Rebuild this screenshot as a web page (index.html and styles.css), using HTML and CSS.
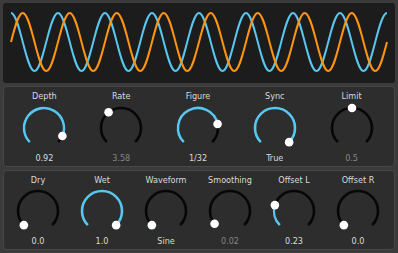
FILE: index.html
```html
<!DOCTYPE html>
<html>
<head>
<meta charset="utf-8">
<link rel="stylesheet" href="styles.css">
</head>
<body>
<div class="app">
  <div class="scope">
    <svg class="wave" width="392" height="80" viewBox="0 0 392 80">
      <path class="w-blue" d="M8 10 c4.252 0 7.918 14.143 11.75 29 s7.498 29 11.75 29 s7.918 -14.143 11.75 -29 s7.498 -29 11.75 -29 s7.918 14.143 11.75 29 s7.498 29 11.75 29 s7.918 -14.143 11.75 -29 s7.498 -29 11.75 -29 s7.918 14.143 11.75 29 s7.498 29 11.75 29 s7.918 -14.143 11.75 -29 s7.498 -29 11.75 -29 s7.918 14.143 11.75 29 s7.498 29 11.75 29 s7.918 -14.143 11.75 -29 s7.498 -29 11.75 -29 s7.918 14.143 11.75 29 s7.498 29 11.75 29 s7.918 -14.143 11.75 -29 s7.498 -29 11.75 -29 s7.918 14.143 11.75 29 s7.498 29 11.75 29 s7.918 -14.143 11.75 -29 s7.498 -29 11.75 -29 s7.918 14.143 11.75 29 s7.498 29 11.75 29 s7.918 -14.143 11.75 -29 s7.498 -29 11.75 -29 s7.918 14.143 11.75 29 s7.498 29 11.75 29 s7.918 -14.143 11.75 -29 s7.498 -29 11.75 -29"/>
      <path class="w-orange" d="M8 39 c3.832 -14.857 7.498 -29 11.75 -29 s7.918 14.143 11.75 29 s7.498 29 11.75 29 s7.918 -14.143 11.75 -29 s7.498 -29 11.75 -29 s7.918 14.143 11.75 29 s7.498 29 11.75 29 s7.918 -14.143 11.75 -29 s7.498 -29 11.75 -29 s7.918 14.143 11.75 29 s7.498 29 11.75 29 s7.918 -14.143 11.75 -29 s7.498 -29 11.75 -29 s7.918 14.143 11.75 29 s7.498 29 11.75 29 s7.918 -14.143 11.75 -29 s7.498 -29 11.75 -29 s7.918 14.143 11.75 29 s7.498 29 11.75 29 s7.918 -14.143 11.75 -29 s7.498 -29 11.75 -29 s7.918 14.143 11.75 29 s7.498 29 11.75 29 s7.918 -14.143 11.75 -29 s7.498 -29 11.75 -29 s7.918 14.143 11.75 29 s7.498 29 11.75 29 s7.918 -14.143 11.75 -29 s7.498 -29 11.75 -29 s7.918 14.143 11.75 29 s7.498 29 11.75 29 s7.918 -14.143 11.75 -29"/>
    </svg>
  </div>

  <div class="panel top">
    <div class="knob">
      <div class="label">Depth</div>
      <svg class="dial" viewBox="0 0 48 48"><path class="trk" d="M9.86 38.14A20 20 0 1 1 38.14 38.14"/><path class="val" d="M9.86 38.14A20 20 0 1 1 42.36 31.94"/><circle class="dot" cx="42.36" cy="31.94" r="4.3"/></svg>
      <div class="value">0.92</div>
    </div>
    <div class="knob">
      <div class="label">Rate</div>
      <svg class="dial" viewBox="0 0 48 48"><path class="trk" d="M9.86 38.14A20 20 0 1 1 38.14 38.14"/><circle class="dot" cx="11.59" cy="8.31" r="4.3"/></svg>
      <div class="value off">3.58</div>
    </div>
    <div class="knob">
      <div class="label">Figure</div>
      <svg class="dial" viewBox="0 0 48 48"><path class="trk" d="M9.86 38.14A20 20 0 1 1 38.14 38.14"/><path class="val" d="M9.86 38.14A20 20 0 1 1 43.58 19.94"/><circle class="dot" cx="43.58" cy="19.94" r="4.3"/></svg>
      <div class="value">1/32</div>
    </div>
    <div class="knob">
      <div class="label">Sync</div>
      <svg class="dial" viewBox="0 0 48 48"><path class="val" d="M9.86 38.14A20 20 0 1 1 38.14 38.14"/><circle class="dot" cx="38.14" cy="38.14" r="4.3"/></svg>
      <div class="value">True</div>
    </div>
    <div class="knob">
      <div class="label">Limit</div>
      <svg class="dial" viewBox="0 0 48 48"><path class="trk" d="M9.86 38.14A20 20 0 1 1 38.14 38.14"/><circle class="dot" cx="24" cy="4" r="4.3"/></svg>
      <div class="value off">0.5</div>
    </div>
  </div>

  <div class="panel bottom">
    <div class="knob">
      <div class="label">Dry</div>
      <svg class="dial" viewBox="0 0 48 48"><path class="trk" d="M9.86 38.14A20 20 0 1 1 38.14 38.14"/><circle class="dot" cx="9.86" cy="38.14" r="4.3"/></svg>
      <div class="value">0.0</div>
    </div>
    <div class="knob">
      <div class="label">Wet</div>
      <svg class="dial" viewBox="0 0 48 48"><path class="val" d="M9.86 38.14A20 20 0 1 1 38.14 38.14"/><circle class="dot" cx="38.14" cy="38.14" r="4.3"/></svg>
      <div class="value">1.0</div>
    </div>
    <div class="knob">
      <div class="label">Waveform</div>
      <svg class="dial" viewBox="0 0 48 48"><path class="trk" d="M9.86 38.14A20 20 0 1 1 38.14 38.14"/><circle class="dot" cx="9.86" cy="38.14" r="4.3"/></svg>
      <div class="value">Sine</div>
    </div>
    <div class="knob">
      <div class="label">Smoothing</div>
      <svg class="dial" viewBox="0 0 48 48"><path class="trk" d="M9.86 38.14A20 20 0 1 1 38.14 38.14"/><circle class="dot" cx="8.59" cy="36.75" r="4.3"/></svg>
      <div class="value off">0.02</div>
    </div>
    <div class="knob">
      <div class="label">Offset L</div>
      <svg class="dial" viewBox="0 0 48 48"><path class="trk" d="M9.86 38.14A20 20 0 1 1 38.14 38.14"/><path class="val" d="M9.86 38.14A20 20 0 0 1 4.88 18.12"/><circle class="dot" cx="4.88" cy="18.12" r="4.3"/></svg>
      <div class="value">0.23</div>
    </div>
    <div class="knob">
      <div class="label">Offset R</div>
      <svg class="dial" viewBox="0 0 48 48"><path class="trk" d="M9.86 38.14A20 20 0 1 1 38.14 38.14"/><circle class="dot" cx="9.86" cy="38.14" r="4.3"/></svg>
      <div class="value">0.0</div>
    </div>
  </div>
</div>
</body>
</html>
```
FILE: styles.css
```css
html, body {
  margin: 0;
  padding: 0;
}
body {
  background: #3b3b3b;
  font-family: "DejaVu Sans Condensed", "DejaVu Sans", sans-serif;
  font-size: 9px;
  color: #dadada;
}
.app {
  box-sizing: border-box;
  height: 253px;
  width: 398px;
  padding: 3px;
  display: flex;
  flex-direction: column;
  gap: 3px;
}
.scope {
  height: 80px;
  flex: none;
  background: #1c1c1c;
  border-radius: 3px;
  overflow: hidden;
}
.wave {
  display: block;
}
.w-blue, .w-orange {
  fill: none;
  stroke-width: 2;
}
.w-blue { stroke: #58c6ef; }
.w-orange { stroke: #ff9412; }
.panel {
  flex: 1;
  display: flex;
  background: #2d2d2d;
  border: 1px solid #474747;
  border-radius: 4px;
  padding: 3px 4px 0 2px;
}
.knob {
  flex: 1;
  display: flex;
  flex-direction: column;
  align-items: center;
}
.label, .value {
  line-height: 12px;
  white-space: nowrap;
}
.value.off { color: #868686; }
.dial {
  width: 48px;
  height: 48px;
  margin-top: 1.5px;
  overflow: visible;
}
.trk, .val {
  fill: none;
  stroke-width: 2.6;
}
.trk { stroke: #060606; }
.val { stroke: #58c6ef; }
.dot { fill: #ffffff; }
```
